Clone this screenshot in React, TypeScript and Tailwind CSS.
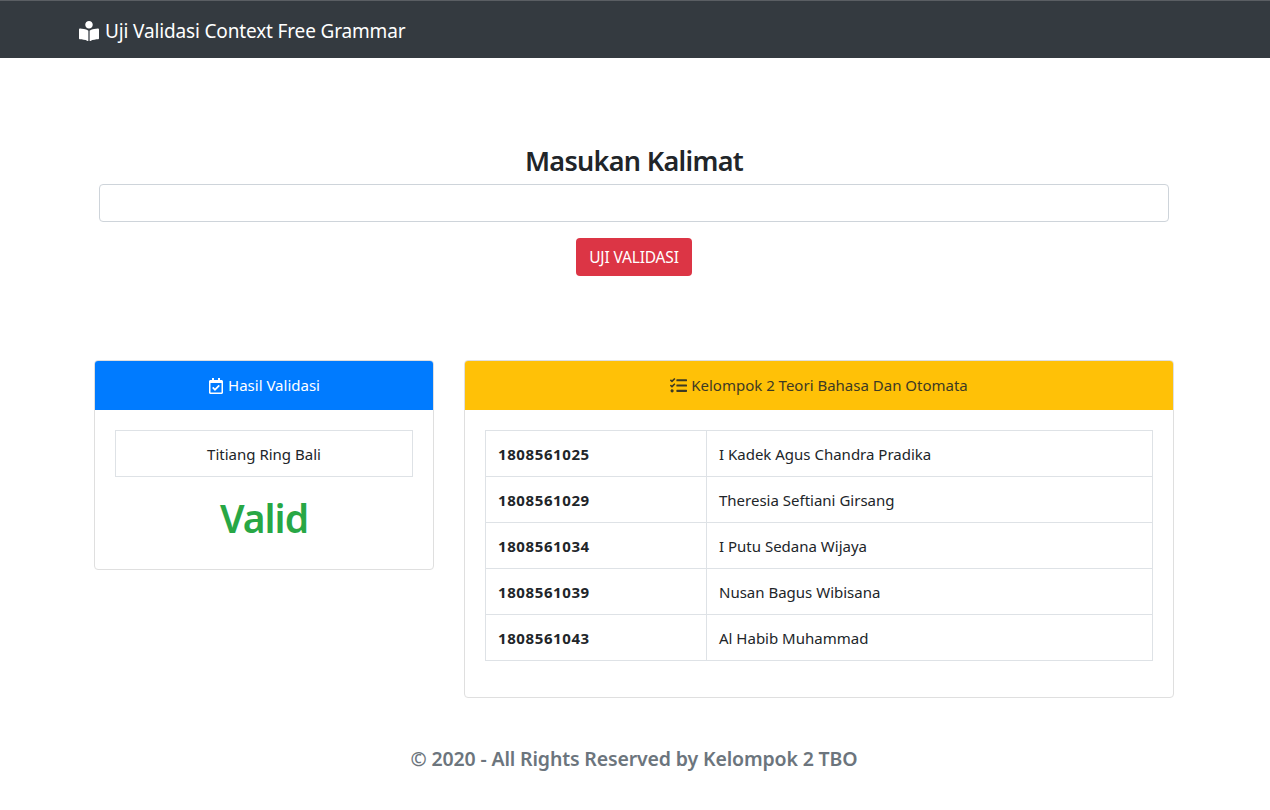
import React from 'react';
import { FaBookReader, FaRegCalendarCheck, FaTasks } from 'react-icons/fa';

const members = [
  { nim: '1808561025', name: 'I Kadek Agus Chandra Pradika' },
  { nim: '1808561029', name: 'Theresia Seftiani Girsang' },
  { nim: '1808561034', name: 'I Putu Sedana Wijaya' },
  { nim: '1808561039', name: 'Nusan Bagus Wibisana' },
  { nim: '1808561043', name: 'Al Habib Muhammad' },
];

const App: React.FC = () => {
  return (
    <div className="min-h-[810px] bg-white font-['Noto_Sans','Open_Sans',sans-serif] text-[#212529]">
      {/* Navbar */}
      <nav className="flex h-[58px] items-center border-t border-t-[#5a5e63] bg-[#343a40] pt-[3px] pl-[79px] text-white">
        <FaBookReader className="mr-[6px] text-[20px]" />
        <span className="text-[19px] tracking-[-0.15px]">Uji Validasi Context Free Grammar</span>
      </nav>

      <main className="mx-auto w-[1080px] -translate-x-px">
        {/* Form */}
        <section className="flex flex-col items-center px-[5px] pt-[84px]">
          <h1 className="text-[27px] leading-[38px] font-semibold tracking-[-0.7px]">Masukan Kalimat</h1>
          <input
            type="text"
            className="mt-[4px] h-[38px] w-full rounded border border-[#ced4da] bg-white px-3"
          />
          <button className="mt-4 h-[38px] w-[116px] rounded bg-[#dc3545] pt-[2px] text-[15.5px] tracking-[-0.15px] text-white">
            UJI VALIDASI
          </button>
        </section>

        {/* Cards */}
        <div className="mt-[84px] grid grid-cols-[340px_710px] items-start gap-[30px]">
          <section className="overflow-hidden rounded border border-[#dfdfdf]">
            <header className="flex h-[49px] items-center justify-center gap-[4px] bg-[#007bff] text-[15px] text-white">
              <FaRegCalendarCheck className="text-[16px]" />
              Hasil Validasi
            </header>
            <div className="px-5 pt-5 pb-[23px]">
              <div className="flex h-[47px] items-center justify-center border border-[#dee2e6] pt-[2px] text-[15px]">
                Titiang Ring Bali
              </div>
              <div className="mt-[13px] text-center text-[39px] leading-[56px] font-semibold tracking-[-1px] text-[#28a745]">
                Valid
              </div>
            </div>
          </section>

          <section className="overflow-hidden rounded border border-[#dfdfdf]">
            <header className="flex h-[49px] items-center justify-center gap-[4px] bg-[#ffc107] text-[15px] text-[#3d3a24]">
              <FaTasks className="text-[17px]" />
              Kelompok 2 Teori Bahasa Dan Otomata
            </header>
            <div className="px-5 pt-5 pb-9">
              <table className="w-full border-collapse text-[15px]">
                <tbody>
                  {members.map((m) => (
                    <tr key={m.nim} className="h-[46px]">
                      <td className="w-[221px] border border-[#dee2e6] px-3 pt-[2px] font-bold tracking-[0.6px]">{m.nim}</td>
                      <td className="border border-[#dee2e6] px-3 pt-[2px]">{m.name}</td>
                    </tr>
                  ))}
                </tbody>
              </table>
            </div>
          </section>
        </div>

        <footer className="mt-[46px] text-center text-[19.5px] font-semibold tracking-[-0.15px] text-[#6c757d]">
          © 2020 - All Rights Reserved by Kelompok 2 TBO
        </footer>
      </main>
    </div>
  );
};

export default App;
